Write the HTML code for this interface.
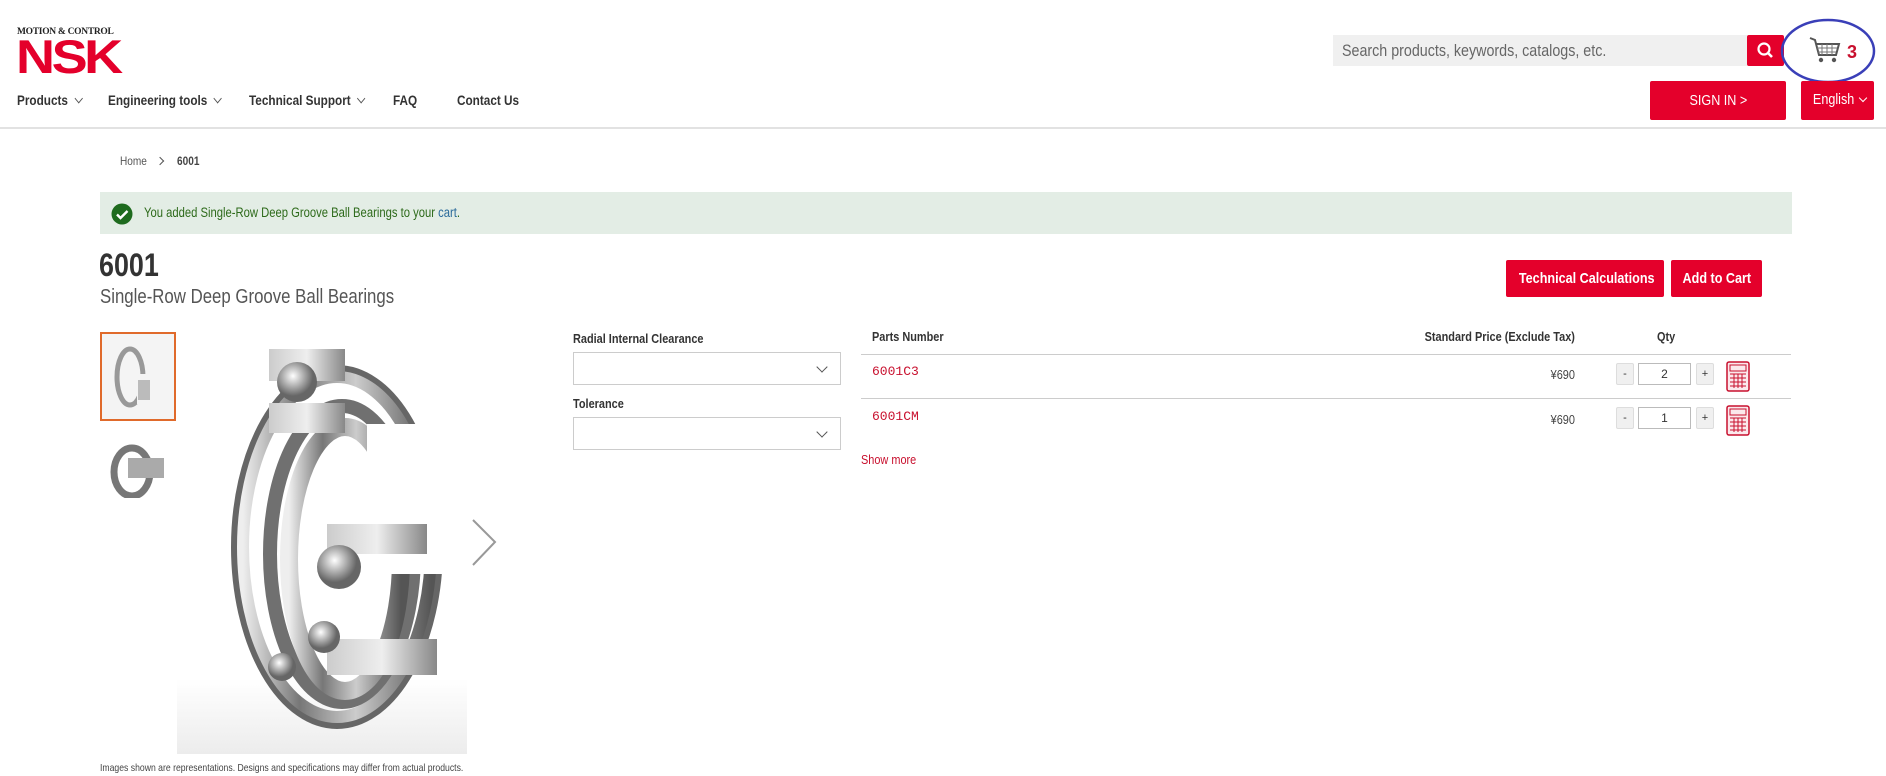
<!DOCTYPE html>
<html><head><meta charset="utf-8"><style>
*{box-sizing:border-box;margin:0;padding:0}
body{width:1886px;height:776px;background:#fff;font-family:"Liberation Sans",sans-serif;color:#333;position:relative;overflow:hidden}
.a{position:absolute;white-space:nowrap}
.t{transform:scaleX(.84);transform-origin:left top}
.tr{transform:scaleX(.84);transform-origin:right top}
.s{display:inline-block;transform:scaleX(.84)}
.red{background:#e4002b;color:#fff}
.nav{font-weight:bold;font-size:14px;color:#333;top:92px}
.chev{display:inline-block;width:7px;height:7px;border-right:1.3px solid #555;border-bottom:1.3px solid #555;transform:rotate(45deg);margin-left:9px;position:relative;top:-3px}
.btn{font-weight:bold;font-size:15px;text-align:center;border-radius:2px}
.sel{border:1px solid #ccc;background:#fff;width:268px;height:33px}
.sel:after{content:"";position:absolute;right:14px;top:10px;width:7px;height:7px;border-right:1.2px solid #555;border-bottom:1.2px solid #555;transform:rotate(45deg)}
.line{height:1px;background:#ccc;left:861px;width:930px}
.pn{font-family:"Liberation Mono",monospace;color:#c8102e;font-size:13px;left:872px}
.q{border:1px solid #ddd;background:#f0f0f0;width:18px;height:22px;font-size:11px;text-align:center;line-height:20px;border-radius:2px}
.qi{border:1px solid #bbb;background:#fff;width:53px;height:22px;font-size:12px;text-align:center;line-height:20px}
</style></head><body>
<div class="a" style="left:17px;top:27px;font-family:'Liberation Serif',serif;font-weight:bold;font-size:9.5px;color:#222;letter-spacing:-0.3px">MOTION &amp; CONTROL</div>
<div class="a" style="left:16px;top:37px;font-family:'Liberation Sans',sans-serif;font-weight:bold;font-size:47px;color:#e4002b;letter-spacing:-3px;transform:scaleX(1.15);transform-origin:left top;line-height:40px">NSK</div>

<div class="a" style="left:1333px;top:35px;width:414px;height:31px;background:#f0f0f0"></div>
<div class="a t" style="left:1342px;top:41px;font-size:17px;color:#666">Search products, keywords, catalogs, etc.</div>
<div class="a red" style="left:1747px;top:35px;width:37px;height:31px;border-radius:2px">
<svg width="37" height="31"><circle cx="17" cy="14" r="5.5" fill="none" stroke="#fff" stroke-width="2.2"/><line x1="21" y1="18" x2="25" y2="22" stroke="#fff" stroke-width="2.6"/></svg></div>
<svg class="a" style="left:1778px;top:18px" width="108" height="66"><ellipse cx="50" cy="33" rx="46" ry="31" fill="none" stroke="#3a3fb8" stroke-width="2.5"/>
<path d="M32 20 L37 22 L41 37 L58 37 L61 26 L38 26" fill="none" stroke="#555" stroke-width="2"/><path d="M39 30h20M40 34h18M44 26v11M49 26v11M54 26v11" stroke="#777" stroke-width="1"/><circle cx="43" cy="42" r="2.2" fill="#555"/><circle cx="56" cy="42" r="2.2" fill="#555"/>
<text x="69" y="40" font-family="Liberation Sans,sans-serif" font-weight="bold" font-size="18" fill="#c8102e">3</text></svg>

<div class="a nav t" style="left:17px">Products<span class="chev"></span></div>
<div class="a nav t" style="left:108px">Engineering tools<span class="chev"></span></div>
<div class="a nav t" style="left:249px">Technical Support<span class="chev"></span></div>
<div class="a nav t" style="left:393px">FAQ</div>
<div class="a nav t" style="left:457px">Contact Us</div>
<div class="a red btn" style="left:1650px;top:81px;width:136px;height:39px;line-height:39px;font-weight:normal"><span class="s">SIGN IN &gt;</span></div>
<div class="a red btn" style="left:1801px;top:81px;width:73px;height:39px;line-height:37px;font-weight:normal"><span class="s">English</span><span style="display:inline-block;width:6px;height:6px;border-right:1.3px solid #fff;border-bottom:1.3px solid #fff;transform:rotate(45deg);margin-left:2px;position:relative;top:-3px"></span></div>
<div class="a" style="left:0;top:127px;width:1886px;height:2px;background:#e2e2e2"></div>

<div class="a t" style="left:120px;top:154px;font-size:12px;color:#555">Home</div>
<div class="a" style="left:157px;top:158px;width:6px;height:6px;border-right:1.5px solid #555;border-top:1.5px solid #555;transform:rotate(45deg)"></div>
<div class="a t" style="left:177px;top:154px;font-size:12px;font-weight:bold;color:#444">6001</div>

<div class="a" style="left:100px;top:192px;width:1692px;height:42px;background:#e3ede5"></div>
<svg class="a" style="left:111px;top:203px" width="22" height="22"><circle cx="11" cy="11" r="10.5" fill="#1e6b1e"/><path d="M6 11.5l3.5 3.5 7-7" fill="none" stroke="#fff" stroke-width="2.4"/></svg>
<div class="a t" style="left:144px;top:205px;font-size:13.4px;color:#2d6a1a">You added Single-Row Deep Groove Ball Bearings to your <span style="color:#2a6a9a">cart</span>.</div>

<div class="a t" style="left:99px;top:247px;font-size:32px;font-weight:bold;color:#333">6001</div>
<div class="a t" style="left:100px;top:286px;font-size:20px;color:#555">Single-Row Deep Groove Ball Bearings</div>

<div class="a red btn" style="left:1506px;top:260px;width:158px;height:37px;line-height:37px"><span class="s">Technical Calculations</span></div>
<div class="a red btn" style="left:1671px;top:260px;width:91px;height:37px;line-height:37px"><span class="s">Add to Cart</span></div>

<div class="a" style="left:100px;top:332px;width:76px;height:89px;border:2px solid #e06a2b;background:#f4f4f4"></div>
<svg class="a" style="left:100px;top:332px" width="76" height="180">
<ellipse cx="30" cy="45" rx="13" ry="28" fill="none" stroke="#999" stroke-width="5"/><rect x="37" y="42" width="16" height="30" fill="#f4f4f4"/><rect x="38" y="48" width="12" height="20" fill="#bbb"/>
<ellipse cx="32" cy="140" rx="18" ry="24" fill="none" stroke="#777" stroke-width="7"/><rect x="28" y="126" width="36" height="20" fill="#aaa"/><rect x="0" y="166" width="76" height="14" fill="#fff"/>
</svg>

<svg class="a" style="left:177px;top:349px" width="350" height="405">
<defs><linearGradient id="g" x1="0" x2="1"><stop offset="0" stop-color="#eee"/><stop offset=".3" stop-color="#777"/><stop offset=".6" stop-color="#ccc"/><stop offset="1" stop-color="#555"/></linearGradient>
<linearGradient id="m" x1="0" x2="1"><stop offset="0" stop-color="#ccc"/><stop offset=".5" stop-color="#eee"/><stop offset="1" stop-color="#888"/></linearGradient>
<radialGradient id="b" cx=".4" cy=".35"><stop offset="0" stop-color="#fff"/><stop offset="1" stop-color="#666"/></radialGradient>
<linearGradient id="sh" x1="0" y1="0" x2="0" y2="1"><stop offset="0" stop-color="#fff"/><stop offset="1" stop-color="#ececec"/></linearGradient></defs>
<rect x="0" y="330" width="290" height="75" fill="url(#sh)"/>
<ellipse cx="160" cy="198" rx="102" ry="178" fill="none" stroke="#666" stroke-width="8"/>
<ellipse cx="160" cy="198" rx="94" ry="170" fill="none" stroke="url(#g)" stroke-width="12"/>
<ellipse cx="165" cy="205" rx="72" ry="148" fill="none" stroke="#707070" stroke-width="14"/>
<ellipse cx="168" cy="210" rx="56" ry="132" fill="none" stroke="url(#g)" stroke-width="18"/>
<path d="M190 75 L290 75 L290 225 L190 225 Z" fill="#fff"/>
<rect x="92" y="-5" width="76" height="37" fill="url(#m)"/><rect x="92" y="54" width="76" height="30" fill="url(#m)"/>
<circle cx="120" cy="33" r="20" fill="url(#b)"/>
<rect x="150" y="175" width="100" height="30" fill="url(#m)"/>
<circle cx="162" cy="218" r="22" fill="url(#b)"/>
<rect x="150" y="290" width="110" height="36" fill="url(#m)"/>
<circle cx="147" cy="288" r="16" fill="url(#b)"/><circle cx="105" cy="318" r="14" fill="url(#b)"/>
</svg>
<svg class="a" style="left:470px;top:518px" width="28" height="50"><path d="M3 2 L25 24 L3 47" fill="none" stroke="#999" stroke-width="2"/></svg>
<div class="a t" style="left:100px;top:763px;font-size:10.3px;color:#444">Images shown are representations. Designs and specifications may differ from actual products.</div>

<div class="a t" style="left:573px;top:331px;font-size:13px;font-weight:bold">Radial Internal Clearance</div>
<div class="a sel" style="left:573px;top:352px"></div>
<div class="a t" style="left:573px;top:396px;font-size:13px;font-weight:bold">Tolerance</div>
<div class="a sel" style="left:573px;top:417px"></div>

<div class="a t" style="left:872px;top:329px;font-size:13px;font-weight:bold">Parts Number</div>
<div class="a tr" style="right:311px;top:329px;font-size:13px;font-weight:bold">Standard Price (Exclude Tax)</div>
<div class="a t" style="left:1657px;top:329px;font-size:13px;font-weight:bold">Qty</div>
<div class="a line" style="top:354px"></div>
<div class="a pn" style="top:364px">6001C3</div>
<div class="a tr" style="right:311px;top:367px;font-size:13px;color:#444">¥690</div>
<div class="a q" style="left:1616px;top:363px">-</div><div class="a qi" style="left:1638px;top:363px">2</div><div class="a q" style="left:1696px;top:363px">+</div>
<div class="a line" style="top:398px"></div>
<div class="a pn" style="top:409px">6001CM</div>
<div class="a tr" style="right:311px;top:412px;font-size:13px;color:#444">¥690</div>
<div class="a q" style="left:1616px;top:407px">-</div><div class="a qi" style="left:1638px;top:407px">1</div><div class="a q" style="left:1696px;top:407px">+</div>
<svg class="a" style="left:1726px;top:361px" width="24" height="32"><rect x="1" y="1" width="22" height="29" rx="2" fill="#fbe8ec" stroke="#c8102e" stroke-width="1.5"/><rect x="4" y="4" width="16" height="6" fill="none" stroke="#c8102e"/><path d="M4 13h16M4 17h16M4 21h16M4 25h16M8 13v14M12 13v14M16 13v14" stroke="#c8102e" stroke-width="1"/></svg>
<svg class="a" style="left:1726px;top:405px" width="24" height="32"><rect x="1" y="1" width="22" height="29" rx="2" fill="#fbe8ec" stroke="#c8102e" stroke-width="1.5"/><rect x="4" y="4" width="16" height="6" fill="none" stroke="#c8102e"/><path d="M4 13h16M4 17h16M4 21h16M4 25h16M8 13v14M12 13v14M16 13v14" stroke="#c8102e" stroke-width="1"/></svg>
<div class="a t" style="left:861px;top:452px;font-size:13px;color:#c8102e">Show more</div>
</body></html>
